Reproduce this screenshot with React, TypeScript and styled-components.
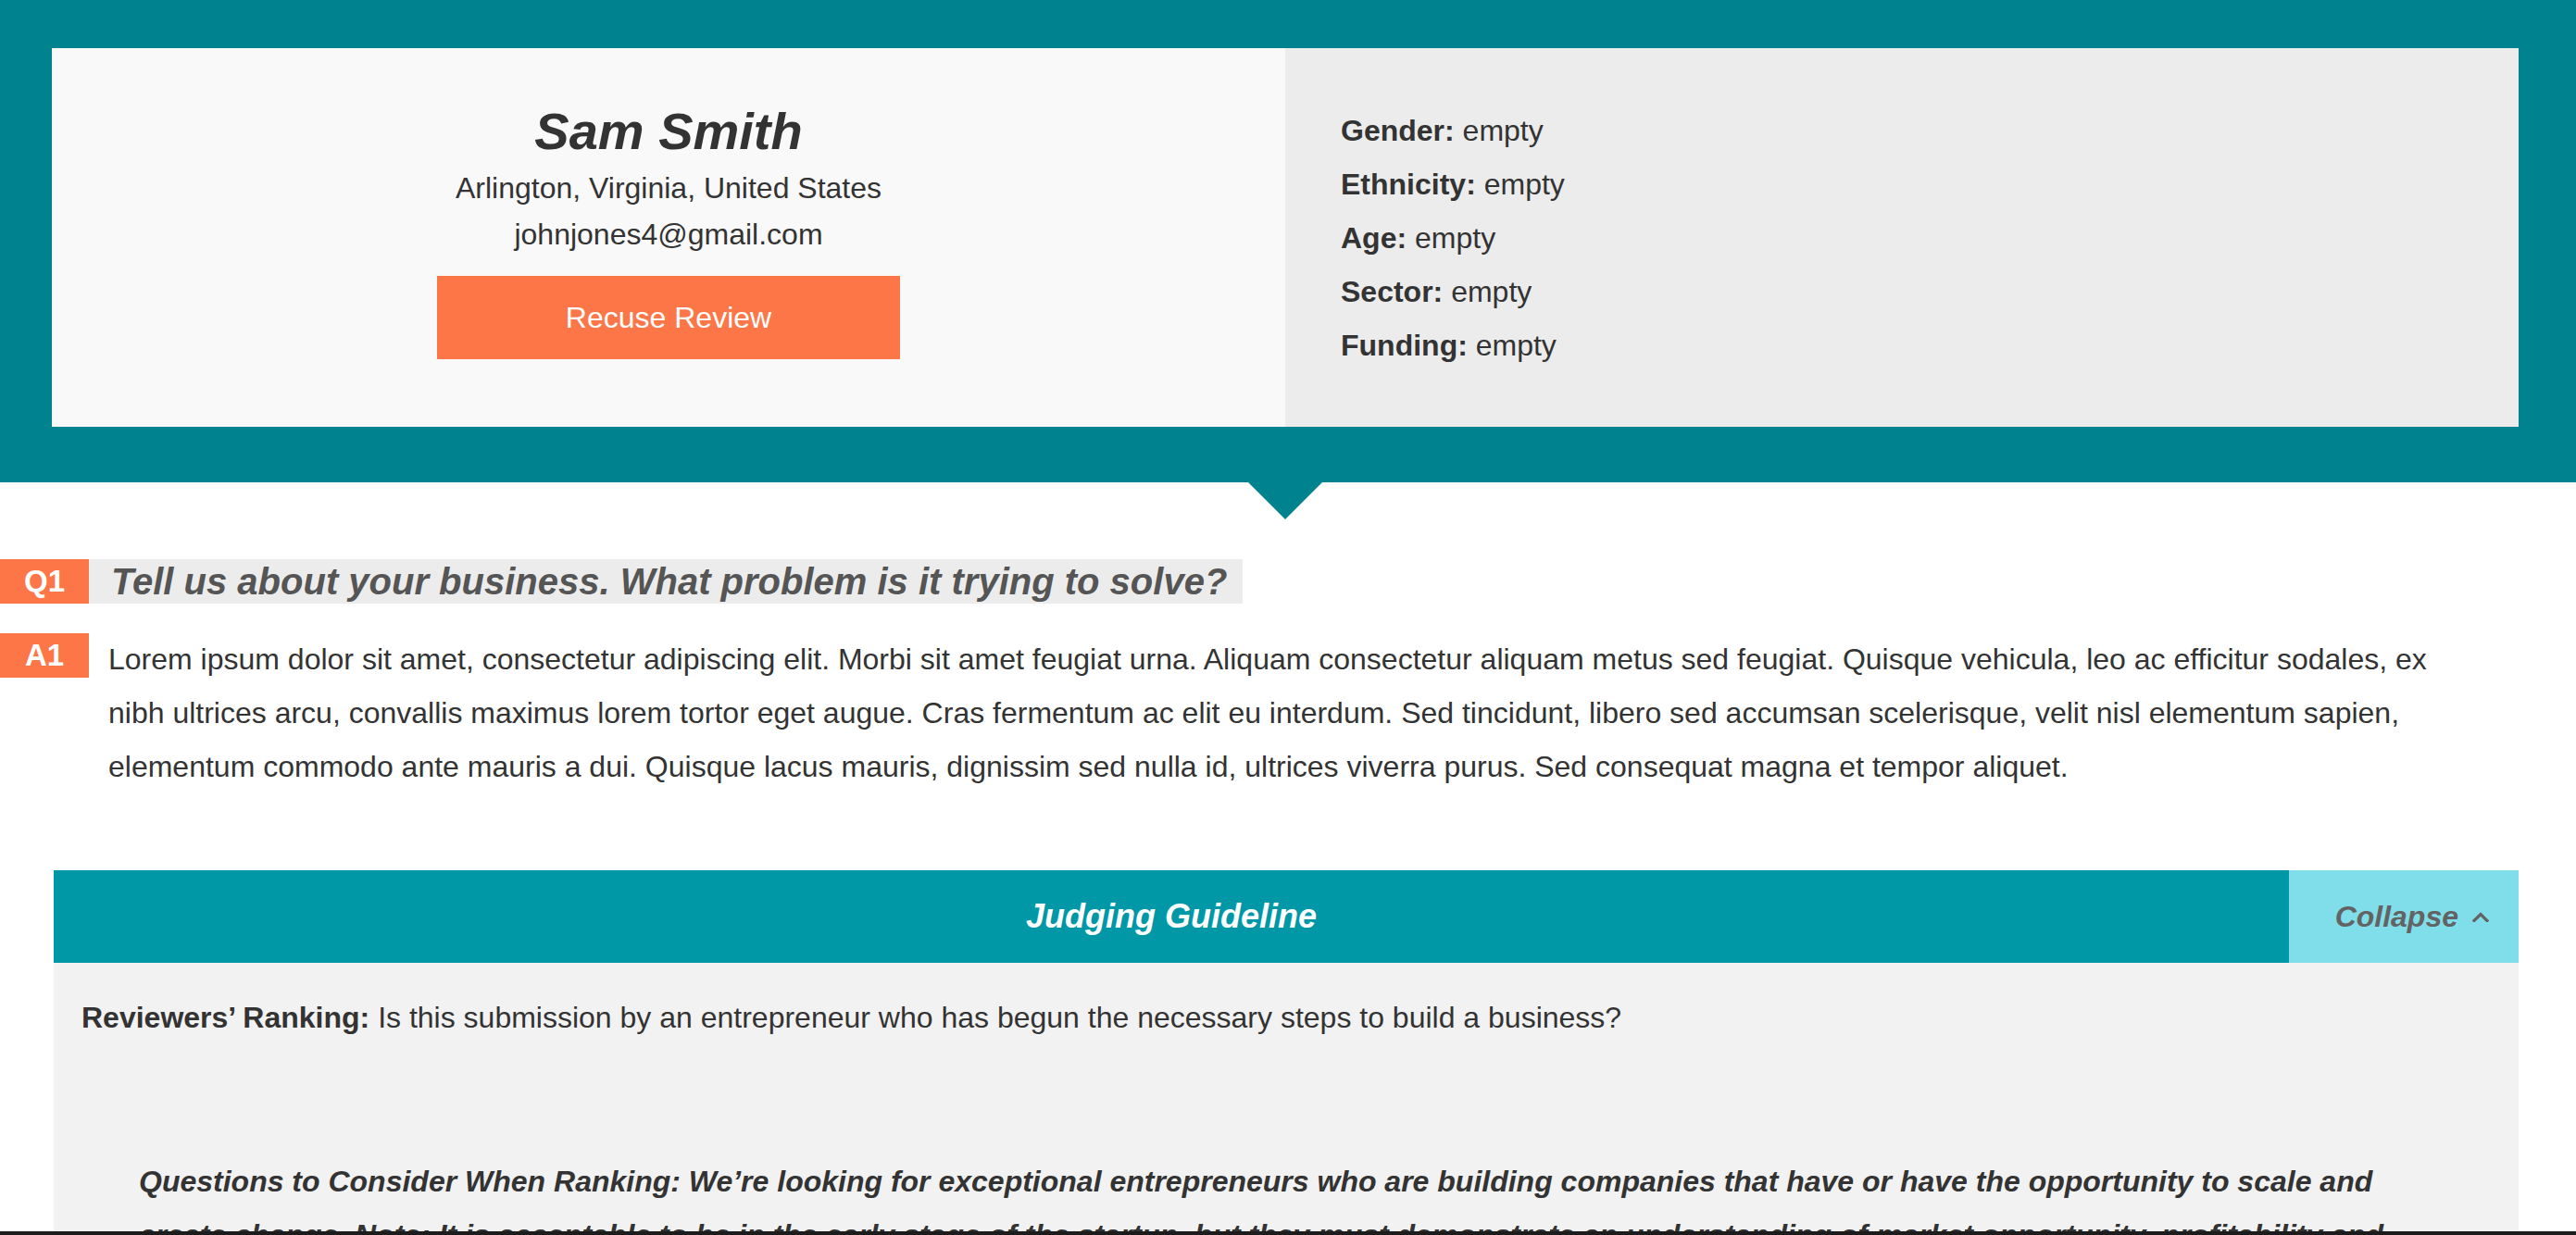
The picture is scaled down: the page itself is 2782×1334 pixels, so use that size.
import React from "react";
import styled, { createGlobalStyle } from "styled-components";

const GlobalStyle = createGlobalStyle`
  html, body {
    margin: 0;
    padding: 0;
    background: #ffffff;
  }
  body {
    font-family: "Liberation Sans", Arial, Helvetica, sans-serif;
    color: #333333;
  }
  * { box-sizing: border-box; }
`;

const TEAL = "#00838f";
const ORANGE = "#fc7647";

const Banner = styled.header`
  position: relative;
  background: ${TEAL};
  padding: 52px 62px 60px 56px;
`;

const BannerGrid = styled.div`
  display: grid;
  grid-template-columns: 1fr 1fr;
  height: 409px;
`;

const Pointer = styled.div`
  position: absolute;
  top: 100%;
  left: calc(56px + (100% - 118px) / 2);
  transform: translateX(-50%);
  width: 0;
  height: 0;
  border-left: 40px solid transparent;
  border-right: 40px solid transparent;
  border-top: 40px solid ${TEAL};
`;

const ProfileCard = styled.section`
  background: #f9f9f9;
  display: flex;
  flex-direction: column;
  align-items: center;
  padding-top: 56px;
`;

const Name = styled.h1`
  margin: 0 0 3px;
  font-size: 56px;
  line-height: 67px;
  font-weight: 700;
  font-style: italic;
  color: #333333;
`;

const MetaLine = styled.div`
  font-size: 32px;
  line-height: 50px;
  color: #333333;
`;

const RecuseButton = styled.button`
  margin-top: 20px;
  width: 500px;
  height: 90px;
  border: none;
  background: ${ORANGE};
  color: #ffffff;
  font-family: "Liberation Sans", Arial, sans-serif;
  font-size: 32px;
  cursor: pointer;
`;

const DetailsCard = styled.section`
  background: #ececec;
  display: flex;
  flex-direction: column;
  justify-content: center;
  padding-left: 60px;
`;

const DetailRow = styled.div`
  font-size: 32px;
  line-height: 58px;
  color: #333333;

  b {
    font-weight: 700;
  }
`;

const QASection = styled.main`
  padding-top: 83px;
`;

const QARow = styled.div<{ $gap?: number }>`
  display: flex;
  align-items: flex-start;
  margin-top: ${(p) => p.$gap ?? 0}px;
`;

const Badge = styled.div`
  flex: 0 0 96px;
  width: 96px;
  height: 48px;
  background: ${ORANGE};
  color: #ffffff;
  font-size: 33px;
  font-weight: 700;
  line-height: 48px;
  text-align: center;
`;

const Question = styled.h2`
  margin: 0;
  background: #ececec;
  padding: 0 17px 0 24px;
  font-size: 40px;
  line-height: 48px;
  font-weight: 700;
  font-style: italic;
  color: #555555;
`;

const Answer = styled.p`
  margin: -1px 127px 0 21px;
  font-size: 32px;
  line-height: 58px;
  color: #333333;
`;

const Guideline = styled.section`
  margin: 83px 62px 0 58px;
`;

const GuidelineHeader = styled.div`
  display: grid;
  grid-template-columns: 1fr 248px;
  height: 100px;
`;

const GuidelineTitle = styled.div`
  background: #0097a7;
  display: flex;
  align-items: center;
  justify-content: center;
  color: #ffffff;
  font-size: 36px;
  font-weight: 700;
  font-style: italic;
`;

const CollapseToggle = styled.button`
  background: #80deea;
  border: none;
  display: flex;
  align-items: center;
  justify-content: flex-end;
  gap: 15px;
  padding: 0 32px 0 0;
  color: #636363;
  font-family: "Liberation Sans", Arial, sans-serif;
  font-size: 32px;
  font-weight: 700;
  font-style: italic;
  cursor: pointer;
`;

const GuidelineBody = styled.div`
  background: #f2f2f2;
  padding: 30px 30px 60px;
`;

const RankingLine = styled.p`
  margin: 0;
  font-size: 32px;
  line-height: 58px;
  color: #333333;

  b {
    font-weight: 700;
  }
`;

const Considerations = styled.p`
  margin: 119px 62px 0;
  font-size: 32px;
  line-height: 58px;
  font-weight: 700;
  font-style: italic;
  color: #333333;
`;

const FrameEdge = styled.div`
  position: fixed;
  left: 0;
  right: 0;
  bottom: 0;
  height: 4px;
  background: #1c1c1c;
`;

const details: [string, string][] = [
  ["Gender", "empty"],
  ["Ethnicity", "empty"],
  ["Age", "empty"],
  ["Sector", "empty"],
  ["Funding", "empty"],
];

export default function App() {
  return (
    <>
      <GlobalStyle />
      <Banner>
        <BannerGrid>
          <ProfileCard>
            <Name>Sam Smith</Name>
            <MetaLine>Arlington, Virginia, United States</MetaLine>
            <MetaLine>johnjones4@gmail.com</MetaLine>
            <RecuseButton>Recuse Review</RecuseButton>
          </ProfileCard>
          <DetailsCard>
            {details.map(([label, value]) => (
              <DetailRow key={label}>
                <b>{label}:</b> {value}
              </DetailRow>
            ))}
          </DetailsCard>
        </BannerGrid>
        <Pointer />
      </Banner>

      <QASection>
        <QARow>
          <Badge>Q1</Badge>
          <Question>Tell us about your business. What problem is it trying to solve?</Question>
        </QARow>
        <QARow $gap={32}>
          <Badge>A1</Badge>
          <Answer>
            Lorem ipsum dolor sit amet, consectetur adipiscing elit. Morbi sit amet feugiat urna. Aliquam
            consectetur aliquam metus sed feugiat. Quisque vehicula, leo ac efficitur sodales, ex nibh ultrices
            arcu, convallis maximus lorem tortor eget augue. Cras fermentum ac elit eu interdum. Sed tincidunt,
            libero sed accumsan scelerisque, velit nisl elementum sapien, elementum commodo ante mauris a dui.
            Quisque lacus mauris, dignissim sed nulla id, ultrices viverra purus. Sed consequat magna et tempor
            aliquet.
          </Answer>
        </QARow>

        <Guideline>
          <GuidelineHeader>
            <GuidelineTitle>Judging Guideline</GuidelineTitle>
            <CollapseToggle>
              Collapse
              <svg width="18" height="11" viewBox="0 0 18 11" aria-hidden="true">
                <polyline
                  points="2,9.5 9,2.5 16,9.5"
                  fill="none"
                  stroke="#636363"
                  strokeWidth="3.2"
                  strokeLinecap="square"
                />
              </svg>
            </CollapseToggle>
          </GuidelineHeader>
          <GuidelineBody>
            <RankingLine>
              <b>Reviewers’ Ranking:</b> Is this submission by an entrepreneur who has begun the necessary steps
              to build a business?
            </RankingLine>
            <Considerations>
              Questions to Consider When Ranking: We’re looking for exceptional entrepreneurs who are building
              companies that have or have the opportunity to scale and create change. Note: It is acceptable to be
              in the early stage of the startup, but they must demonstrate an understanding of market opportunity,
              profitability and scalability.
            </Considerations>
          </GuidelineBody>
        </Guideline>
      </QASection>
      <FrameEdge />
    </>
  );
}
